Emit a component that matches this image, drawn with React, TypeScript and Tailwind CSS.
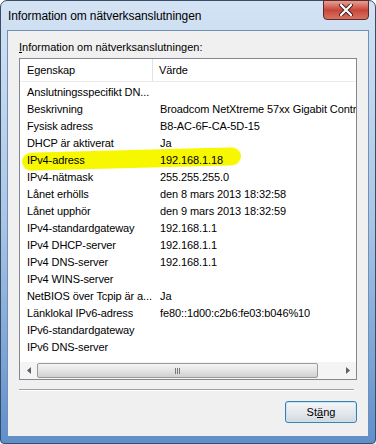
import React from 'react'

const rows: [string, string][] = [
  ['Anslutningsspecifikt DN...', ''],
  ['Beskrivning', 'Broadcom NetXtreme 57xx Gigabit Controller'],
  ['Fysisk adress', 'B8-AC-6F-CA-5D-15'],
  ['DHCP är aktiverat', 'Ja'],
  ['IPv4-adress', '192.168.1.18'],
  ['IPv4-nätmask', '255.255.255.0'],
  ['Lånet erhölls', 'den 8 mars 2013 18:32:58'],
  ['Lånet upphör', 'den 9 mars 2013 18:32:59'],
  ['IPv4-standardgateway', '192.168.1.1'],
  ['IPv4 DHCP-server', '192.168.1.1'],
  ['IPv4 DNS-server', '192.168.1.1'],
  ['IPv4 WINS-server', ''],
  ['NetBIOS över Tcpip är a...', 'Ja'],
  ['Länklokal IPv6-adress', 'fe80::1d00:c2b6:fe03:b046%10'],
  ['IPv6-standardgateway', ''],
  ['IPv6 DNS-server', ''],
]

function Arrow({ dir }: { dir: 'left' | 'right' }) {
  return (
    <svg width="4" height="7" viewBox="0 0 4 7">
      {dir === 'left' ? <path d="M4 0 L0 3.5 L4 7 Z" fill="#606060" /> : <path d="M0 0 L4 3.5 L0 7 Z" fill="#606060" />}
    </svg>
  )
}

export default function App() {
  return (
    <div
      className="w-[376px] h-[444px] flex flex-col rounded-t-[7px] rounded-b-[4px] border border-[#3a4d66] bg-gradient-to-b from-[#d4e3f4] via-[#a9c5e6] to-[#5f8fcb]"
      style={{ fontFamily: '"Liberation Sans", Arial, sans-serif' }}
    >
      {/* titelrad */}
      <div className="relative h-[29px] flex items-center pl-[7px]">
        <span className="text-[12px] text-black tracking-[-0.1px]">Information om nätverksanslutningen</span>
        <div className="absolute right-[6px] top-[-1px] w-[46px] h-[20px] rounded-b-[4px] border border-[#5c2a2a] bg-gradient-to-b from-[#e4a096] via-[#c8453a] to-[#d6725f] flex items-center justify-center">
          <svg width="14" height="12" viewBox="0 0 14 12">
            <path d="M2 1 L12 11 M12 1 L2 11" stroke="#3b1f1f" strokeWidth="4" strokeLinecap="round" />
            <path d="M2 1 L12 11 M12 1 L2 11" stroke="#ffffff" strokeWidth="2.2" strokeLinecap="round" />
          </svg>
        </div>
      </div>

      {/* klientyta */}
      <div className="mx-[6px] mb-[6px] flex-1 border border-[#6f8fb6] bg-[#f0f0f0] flex flex-col px-[11px]">
        <div className="pt-[11px] h-[27px] text-[11px] text-black leading-none">
          <span className="underline">I</span>nformation om nätverksanslutningen:
        </div>

        <div className="relative h-[322px] border border-[#828790] bg-white flex flex-col overflow-hidden text-[11px] text-black tracking-[-0.1px]">
          {/* överstrykning */}
          <div className="absolute left-[2px] top-[91px] w-[219px] h-[18px] rounded-[9px] bg-[#f7f700] -rotate-[1.5deg] blur-[0.6px]" />

          <div className="relative h-[23px] flex items-center border-b border-[#eaeaea] shrink-0">
            <div className="w-[133px] h-full flex items-center pl-[7px] border-r border-[#e3e3e3]">Egenskap</div>
            <div className="pl-[6px]">Värde</div>
          </div>
          <div className="relative pt-[2px] shrink-0">
            {rows.map(([k, v]) => (
              <div key={k} className="h-[17px] flex items-center whitespace-nowrap">
                <div className="w-[134px] pl-[7px] shrink-0">{k}</div>
                <div className="pl-[6px]">{v}</div>
              </div>
            ))}
          </div>
          <div className="flex-1" />

          {/* horisontell rullningslist */}
          <div className="h-[17px] shrink-0 flex items-center bg-[#f4f4f4]">
            <div className="w-[17px] flex items-center justify-center">
              <Arrow dir="left" />
            </div>
            <div className="flex-1 h-full py-[1px]">
              <div className="w-[281px] h-full rounded-[2px] border border-[#9a9a9a] bg-gradient-to-b from-[#f4f4f4] via-[#e4e4e4] to-[#d0d0d0] flex items-center justify-center">
                <div className="flex gap-[1px]">
                  <div className="w-[1px] h-[6px] bg-[#7a7a7a]" />
                  <div className="w-[1px] h-[6px] bg-[#7a7a7a]" />
                  <div className="w-[1px] h-[6px] bg-[#7a7a7a]" />
                </div>
              </div>
            </div>
            <div className="w-[17px] flex items-center justify-center">
              <Arrow dir="right" />
            </div>
          </div>
        </div>

        <div className="mt-[9px] mr-[3px] border-t border-[#a0a0a0] border-b border-b-white" />

        <div className="flex justify-end mt-[10px]">
          <button className="w-[72px] h-[22px] rounded-[3px] border border-[#3c7fb1] bg-gradient-to-b from-[#f4f6f8] via-[#e6e9ec] to-[#d2d8de] shadow-[inset_0_0_0_1px_#c4e5f6] text-[11px] text-black">
            St<span className="underline">ä</span>ng
          </button>
        </div>
      </div>
    </div>
  )
}
